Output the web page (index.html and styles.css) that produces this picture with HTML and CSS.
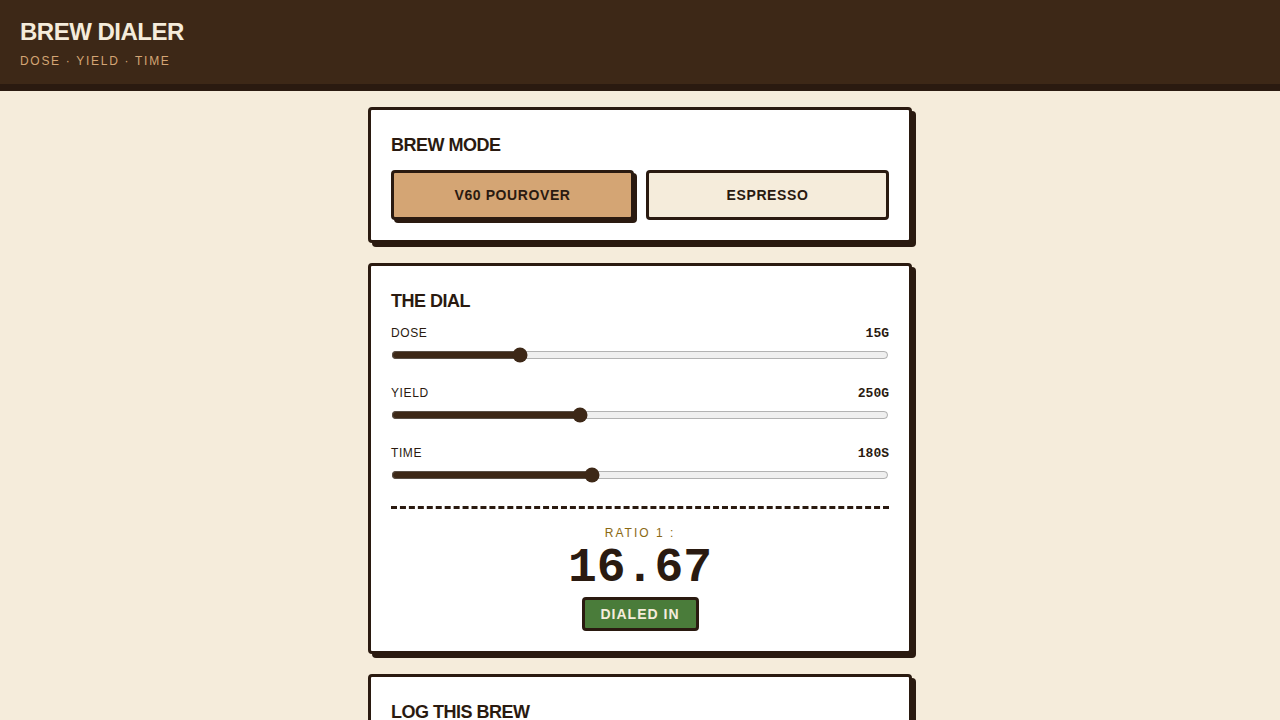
FILE: index.html
```html
<!doctype html>
<html lang="en">
<head>
<meta charset="utf-8">
<title>Brew Dialer</title>
<link rel="stylesheet" href="styles.css">
</head>
<body>
<header class="top">
  <h1>BREW DIALER</h1>
  <p class="tagline">DOSE · YIELD · TIME</p>
</header>
<main class="wrap">
  <section class="card">
    <h2>BREW MODE</h2>
    <div class="modes">
      <button class="mode active" data-mode="v60">V60 POUROVER</button>
      <button class="mode" data-mode="espresso">ESPRESSO</button>
    </div>
  </section>

  <section class="card">
    <h2>THE DIAL</h2>
    <div class="dial">
      <div class="row">
        <label for="dose">DOSE</label><span class="val" id="dose-val">15G</span>
      </div>
      <input id="dose" type="range" min="5" max="45" value="15">
    </div>
    <div class="dial">
      <div class="row">
        <label for="yield">YIELD</label><span class="val" id="yield-val">250G</span>
      </div>
      <input id="yield" type="range" min="100" max="500" value="250">
    </div>
    <div class="dial">
      <div class="row">
        <label for="time">TIME</label><span class="val" id="time-val">180S</span>
      </div>
      <input id="time" type="range" min="60" max="360" value="180">
    </div>
    <div class="result">
      <div class="ratio-label">RATIO 1 :</div>
      <div class="ratio" id="ratio">16.67</div>
      <span class="badge">DIALED IN</span>
    </div>
  </section>

  <section class="card">
    <h2>LOG THIS BREW</h2>
  </section>
</main>
<script>
window.addEventListener("DOMContentLoaded", () => {
  let dose = document.querySelector("#dose");
  let yld = document.querySelector("#yield");
  let time = document.querySelector("#time");
  function update() {
    document.querySelector("#dose-val").textContent = dose.value + "G";
    document.querySelector("#yield-val").textContent = yld.value + "G";
    document.querySelector("#time-val").textContent = time.value + "S";
    document.querySelector("#ratio").textContent = (yld.value / dose.value).toFixed(2);
  }
  [dose, yld, time].forEach((el) => el.addEventListener("input", update));
  document.querySelectorAll(".mode").forEach((btn) => {
    btn.addEventListener("click", () => {
      document.querySelectorAll(".mode").forEach((b) => b.classList.remove("active"));
      btn.classList.add("active");
    });
  });
});
</script>
</body>
</html>
```

FILE: styles.css
```css
body {
  margin: 0;
  background: #f5ecdb;
  color: #2a1a10;
  font-family: "Liberation Sans", Arial, sans-serif;
}
.top {
  background: #3d2817;
  border-bottom: 7px solid #2a1a10;
  padding: 18px 20px 16px;
}
.top h1 {
  margin: 0;
  font-size: 24px;
  letter-spacing: -0.5px;
  color: #f5ecdb;
  line-height: 28px;
}
.tagline {
  margin: 8px 0 0;
  font-size: 12px;
  letter-spacing: 1.7px;
  color: #d4a574;
  line-height: 14px;
}
.wrap {
  width: 544px;
  margin: 16px auto 0;
  display: flex;
  flex-direction: column;
  gap: 20px;
}
.card {
  background: #fff;
  border: 3px solid #2a1a10;
  border-radius: 4px;
  box-shadow: 4px 4px 0 #2a1a10;
  padding: 24px 20px 20px;
}
.card h2 {
  margin: 0 0 14px;
  font-size: 18px;
  line-height: 22px;
  letter-spacing: -0.5px;
}
.modes {
  display: grid;
  grid-template-columns: 1fr 1fr;
  gap: 12px;
}
.mode {
  height: 50px;
  border: 3px solid #2a1a10;
  border-radius: 4px;
  background: #f5ecdb;
  color: #2a1a10;
  font-family: inherit;
  font-size: 14px;
  font-weight: bold;
  letter-spacing: 0.6px;
  cursor: pointer;
}
.mode.active {
  background: #d4a574;
  box-shadow: 3px 3px 0 #2a1a10;
}
.dial { margin-bottom: 23px; }
.dial:first-of-type { margin-top: 2px; }
.row {
  display: flex;
  justify-content: space-between;
  align-items: baseline;
  font-size: 12px;
  letter-spacing: 0.6px;
}
.val {
  font-family: "Liberation Mono", "Courier New", monospace;
  font-weight: bold;
  font-size: 13px;
  letter-spacing: 0;
}
.dial input {
  display: block;
  width: 100%;
  margin: 6px 0 0;
  accent-color: #3d2817;
}
.result {
  border-top: 3px dashed #2a1a10;
  margin-top: 21px;
  padding-top: 17px;
  text-align: center;
}
.ratio-label {
  font-size: 12px;
  letter-spacing: 2px;
  color: #8b6914;
}
.ratio {
  font-family: "Liberation Mono", "Courier New", monospace;
  font-weight: bold;
  font-size: 48px;
  line-height: 57px;
}
.badge {
  display: inline-block;
  background: #4a7c3a;
  color: #f5ecdb;
  border: 3px solid #2a1a10;
  border-radius: 4px;
  padding: 6px 16px;
  font-size: 14px;
  font-weight: bold;
  letter-spacing: 1px;
}
```
